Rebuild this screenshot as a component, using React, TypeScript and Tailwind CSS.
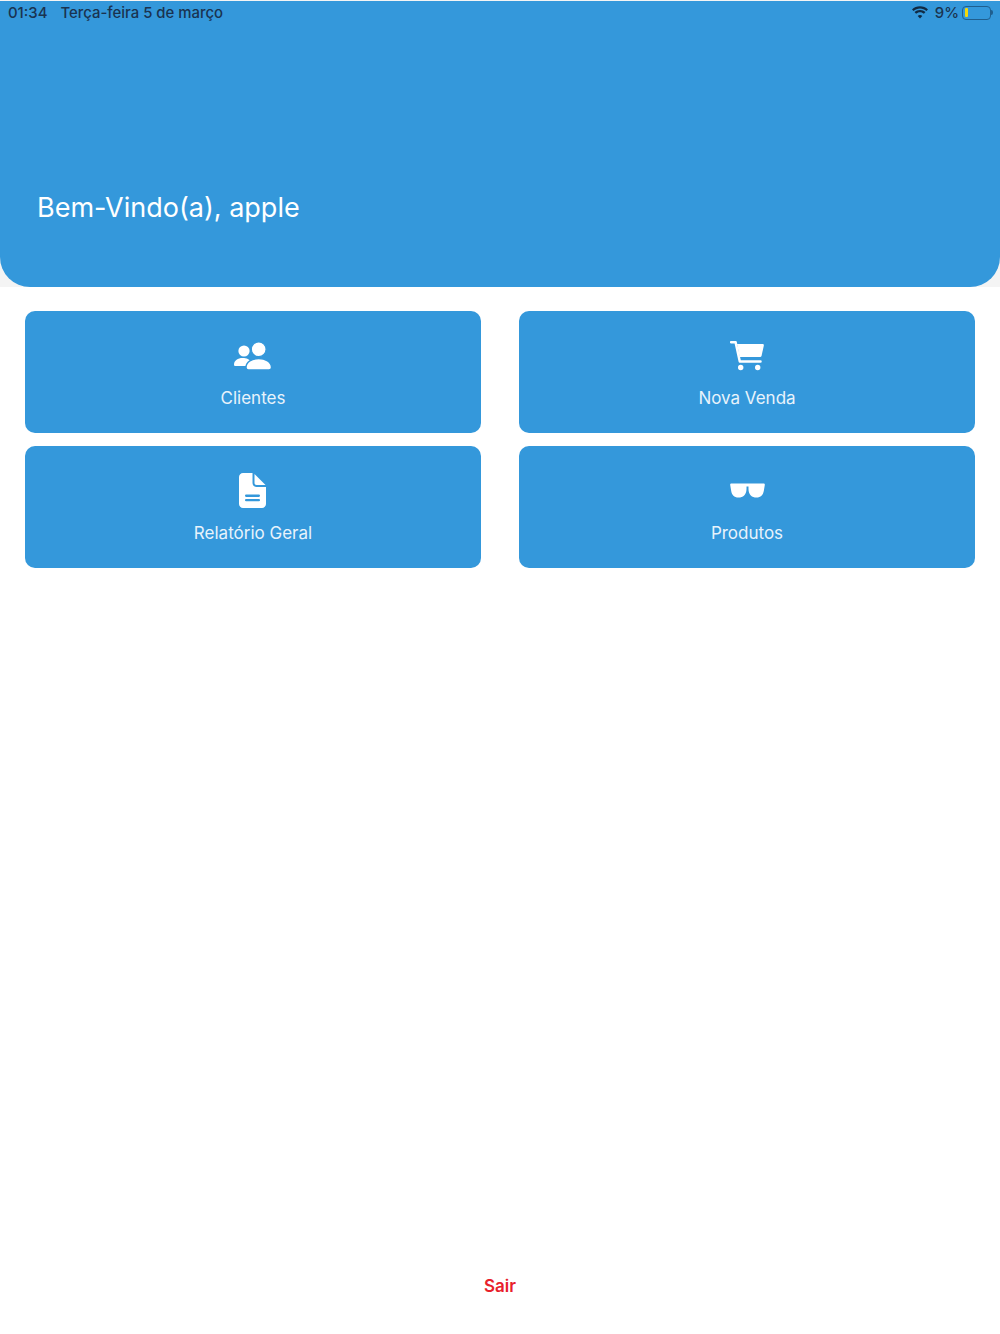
const FONT = "font-['Inter','Liberation_Sans',sans-serif]";

function WifiIcon() {
  return (
    <svg width="18" height="13" viewBox="0 0 18 13" fill="#102a43">
      <path d="M9 2.600c2.500 0 4.700 1 6.400 2.500L17 3.400C14.900 1.400 12.100.2 9 .2S3.100 1.400 1 3.400l1.600 1.700C4.300 3.600 6.500 2.600 9 2.600z" />
      <path d="M9 6.200c1.500 0 2.900.6 3.900 1.500l1.600-1.700C13 4.700 11.100 3.900 9 3.900S5 4.700 3.500 6l1.600 1.700c1-.9 2.400-1.500 3.900-1.500z" />
      <path d="M9 9.100c-.9 0-1.700.3-2.300.9L9 12.500l2.300-2.500c-.6-.6-1.400-.9-2.300-.9z" />
    </svg>
  );
}

function PeopleIcon() {
  return (
    <svg width="38" height="28" viewBox="0 0 38 28" fill="white">
      <circle cx="10" cy="9" r="5.600" />
      <path d="M0 22.500C0 18.500 4 16 8.500 16c4 0 7.500 1.500 8.500 4v4H1.500C.5 24 0 23.500 0 22.500z" />
      <circle cx="24.700" cy="7.300" r="7.400" stroke="#3498db" strokeWidth="1.200" />
      <path d="M12 25.500C12 20 18 16.500 24.700 16.500S37.500 20 37.500 25.500c0 1.500-1 2.500-2.500 2.500H14.500c-1.500 0-2.500-1-2.500-2.500z" stroke="#3498db" strokeWidth="1.400" />
    </svg>
  );
}

function CartIcon() {
  return (
    <svg width="34" height="30" viewBox="0 0 34 30" fill="white">
      <path d="M1.200 1.200H5.600L9.800 20.500H30.500" fill="none" stroke="white" strokeWidth="2.500" strokeLinecap="round" strokeLinejoin="round" />
      <path d="M7 3H32.500c1 0 1.500.7 1.300 1.700L31.500 15c-.2.700-.7 1-1.400 1H9.700z" />
      <circle cx="10.700" cy="26.500" r="2.700" />
      <circle cx="27.700" cy="26.500" r="2.700" />
    </svg>
  );
}

function FileIcon() {
  return (
    <svg width="28" height="35" viewBox="0 0 28 35" fill="white">
      <path d="M4 0h9.500v10c0 2.200 1.800 4 4 4H27v17c0 2.200-1.800 4-4 4H4c-2.200 0-4-1.800-4-4V4c0-2.200 1.800-4 4-4z" />
      <path d="M15.500 1 26.500 12h-9c-1.100 0-2-.9-2-2z" />
      <rect x="6" y="21.600" width="15" height="2.300" rx="1.100" fill="#3498db" />
      <rect x="6" y="26" width="15" height="2.300" rx="1.100" fill="#3498db" />
    </svg>
  );
}

function GlassesIcon() {
  return (
    <svg width="35" height="15" viewBox="0 0 35 15" fill="white">
      <path d="M1.500.5H33.500c1 0 1.500.7 1.300 1.600L33.800 8c-.7 4-3 6.500-7.300 6.500-4.500 0-8-2.500-8-8.500V3.500h-2V6c0 6-3.500 8.500-8 8.500C4 14.500 1.900 12 1.200 8L.2 2.100C0 1.200.5.500 1.500.5z" />
    </svg>
  );
}

function MenuCard({ icon, label }: { icon: React.ReactNode; label: string }) {
  return (
    <button className="flex h-[122px] flex-col items-center rounded-[10px] bg-[#3498db]">
      <div className="mt-[22px] flex h-[45px] items-center justify-center">{icon}</div>
      <span className="mt-[10px] text-[17px] leading-[20px] text-[#e8f3fb]">{label}</span>
    </button>
  );
}

export default function App() {
  return (
    <div className={`flex h-[1334px] w-[1000px] flex-col bg-white ${FONT}`}>
      <div className="bg-[#f4f4f4]">
        <header className="mt-px flex h-[286px] flex-col rounded-b-[30px] bg-[#3498db]">
          <div className="flex h-[24px] items-center justify-between pl-2 pr-[7px] text-[14.9px] font-medium text-[#1a3350]">
            <div className="flex gap-[13px]">
              <span>01:34</span>
              <span>Terça-feira 5 de março</span>
            </div>
            <div className="flex items-center">
              <WifiIcon />
              <span className="ml-[6px]">9%</span>
              <div className="ml-[3px] flex h-[14px] w-[29px] items-center rounded-[4px] border border-[#1f5f8f] pl-[2px]">
                <div className="h-[9px] w-[3px] rounded-[1px] bg-[#f5d90a]" />
              </div>
              <div className="h-[5px] w-[2px] rounded-r-sm bg-[#1f5f8f]" />
            </div>
          </div>
          <h1 className="mt-[165px] pl-[37px] text-[27px] leading-[36px] font-normal text-white">
            Bem-Vindo(a), apple
          </h1>
        </header>
      </div>

      <main className="grid grid-cols-2 gap-x-[38px] gap-y-[13px] px-[25px] pt-[24px]">
        <MenuCard icon={<PeopleIcon />} label="Clientes" />
        <MenuCard icon={<CartIcon />} label="Nova Venda" />
        <MenuCard icon={<FileIcon />} label="Relatório Geral" />
        <MenuCard icon={<GlassesIcon />} label="Produtos" />
      </main>

      <footer className="mt-auto flex justify-center pb-[36px]">
        <button className="text-[17px] leading-[24px] font-semibold text-[#e8212b]">Sair</button>
      </footer>
    </div>
  );
}
